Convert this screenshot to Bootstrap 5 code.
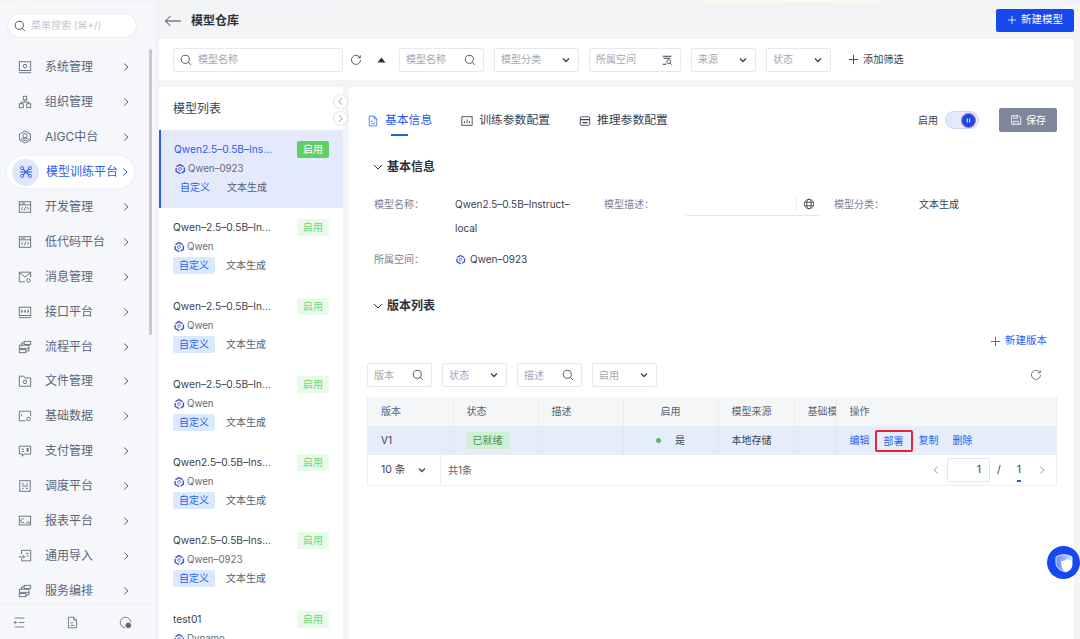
<!DOCTYPE html>
<html lang="zh">

<head>
    <meta charset="utf-8">
    <title>模型仓库</title>
    <link href="https://cdn.jsdelivr.net/npm/bootstrap@5.3.0/dist/css/bootstrap.min.css" rel="stylesheet">
    <style>
        html, body { height: 639px; overflow: hidden; }
        body { font-family: "Inter", "Noto Sans CJK SC", sans-serif; font-size: 11px; color: #3a4150; background: #f3f4f6; }
        svg.ic { fill: none; stroke: currentColor; stroke-width: 1; flex: none; }

        .app-shell { height: 639px; position: relative; overflow: hidden; }
        .top-strip { height: 2px; background: linear-gradient(90deg, #fdf1ec, #eef2fb 25%, #f1f7ee 55%, #fdfbe8 75%, #e9f2fc); }

        /* sidebar */
        .side-bar { width: 155px; flex: none; background: #f5f7fa; height: 637px; position: relative; }
        .side-search { height: 25px; margin: 11px 18px 0 7px; border: 1px solid #e9ebf0; border-radius: 13px; background: #fff; padding-left: 6px; color: #c3c7cf; font-size: 10px; gap: 5px; }
        .side-search svg { color: #3a4150; }
        .side-menu { margin-top: 12px; height: 554px; overflow: hidden; }
        .menu-row { height: 34.9px; padding-left: 18px; color: #5c6579; font-size: 12px; }
        .menu-row .menu-txt { margin-left: 13px; width: 76px; }
        .menu-row .menu-arrow { color: #5c6579; }
        .menu-row.is-on { height: 32px; margin: 1.45px 21px 1.45px 7px; padding-left: 5px; background: #fff; border-radius: 16px; color: #2b5cf0; box-shadow: 0 0 3px rgba(120, 130, 160, .12); width: 127px; }
        .menu-row.is-on .menu-txt { margin-left: 7px; width: 74px; white-space: nowrap; }
        .menu-row.is-on .menu-arrow { color: #2b5cf0; }
        .menu-dot { width: 27px; height: 27px; border-radius: 50%; background: #dfe8fb; flex: none; }
        .side-foot { height: 35px; border-top: 1px solid #eef0f3; padding: 0 20px 0 13px; color: #5c6579; margin-right: 3px; }
        .side-scroll { position: absolute; left: 149px; top: 47px; width: 3px; height: 286px; background: #c6c9ce; border-radius: 2px; }

        /* main */
        .main-area { width: 915px; margin-left: 4px; flex: none; }
        .page-head { height: 37px; padding-left: 5px; }
        .page-title { font-size: 12px; font-weight: 600; color: #2c3240; margin-left: 9px; }
        .btn-new { width: 78px; height: 23px; padding: 0; border: 0; border-radius: 2px; background: #1648ee; color: #fff; font-size: 10.5px; margin-top: -1px; }
        .filter-bar { height: 41px; background: #fff; padding-left: 14px; }
        .fbox { height: 24px; border: 1px solid #e6e8ed; border-radius: 2px; padding: 0 7px 0 6px; color: #a3a8b3; font-size: 10px; background: #fff; flex: none; }
        .fbox svg { color: #3a4150; }
        .filter-bar .fbox + .fbox { margin-left: 10px; }
        .fw-170 { width: 170px; justify-content: flex-start !important; gap: 6px; }
        .fw-85 { width: 85px; }
        .fw-92 { width: 92px; }
        .fw-65 { width: 65px; }
        .tool-refresh { margin: 0 7px 0 7px; color: #3a4150; }
        .tool-caret { margin-right: 13px; color: #2c3240; }
        .add-filter { margin-left: 17px; color: #3a4150; font-size: 10.2px; gap: 4px; }

        .work-row { margin-top: 7px; height: 552px; gap: 6px; }
        .list-panel { width: 184px; flex: none; background: #fff; overflow: hidden; height: 552px; }
        .list-title { height: 43px; padding: 14px 0 0 14px; font-size: 12px; color: #3a4150; line-height: 16px; }
        .model-item { height: 78.3px; padding: 10px 14px 0 14px; }
        .model-item.is-on { background: #e4eafb; border-left: 2px solid #2b5cf0; padding-left: 13px; }
        .model-item.is-on .model-name { color: #2b5cf0; }
        .model-item.is-on .state-tag { background: #5fd068; color: #fff; }
        .model-item.is-on .type-tag { background: #e0ebfb; }
        .model-name { line-height: 18px; color: #3a4150; font-size: 10.2px; white-space: nowrap; }
        .model-space { line-height: 18px; margin-top: 2px; color: #656c7d; font-size: 9.7px; gap: 2px; }
        .model-tags { margin-top: 1px; gap: 11px; font-size: 10px; color: #565d6d; }
        .type-tag { width: 42px; height: 17px; background: #dbe9fd; color: #2b5cf0; border-radius: 2px; line-height: 17px; text-align: center; }
        .tag-txt { line-height: 17px; }
        .state-tag { width: 32px; height: 17px; background: #e8fbe8; color: #72d67c; border-radius: 2px; line-height: 17px; text-align: center; font-size: 10px; margin-top: 1px; }
        .fold-btn { position: absolute; left: 333px; width: 15px; height: 15px; border-radius: 50%; background: #fff; border: 1px solid #dfe2e8; color: #8a90a0; }
        .fold-up { top: 94px; }
        .fold-down { top: 111px; }

        .detail-panel { width: 725px; background: #fff; padding: 21px 17px 0 18px; flex: none; height: 552px; }
        .tab-row { height: 24px; }
        .tab-item { font-size: 11.8px; color: #3a4150; position: relative; gap: 6px; padding-top: 1px; }
        .tab-first { color: #2b5cf0; margin-right: 29px; }
        .tab-first::after { content: ""; position: absolute; left: 24px; bottom: -7px; width: 17px; height: 2px; background: #2b5cf0; }
        .tab-second { margin-right: 29px; }
        .switch-txt { font-size: 10px; color: #3a4150; margin-right: 7px; }
        .switch-box { width: 34px; height: 18px; border-radius: 9px; background: #e2eafb; border: 1px solid #c9d8f6; padding-right: 3px; margin-right: 20px; }
        .switch-knob { width: 13px; height: 13px; border-radius: 50%; background: #1648ee; box-shadow: 0 0 0 1px #b96a96; }
        .btn-save { width: 58px; height: 24px; padding: 0; border: 0; border-radius: 2px; background: #7f879c; color: #fff; font-size: 10px; gap: 4px; }
        .sect-head { height: 18px; font-size: 12px; font-weight: 600; color: #2c3240; padding-left: 6px; gap: 4px; }
        .sect-one { margin-top: 26px; }
        .sect-two { margin-top: 26px; }
        .info-grid { display: grid; grid-template-columns: 81px 149px 82px 148px 85px 1fr; row-gap: 7px; margin-top: 16px; padding-left: 7px; line-height: 24px; }
        .info-key { color: #7d8391; font-size: 10px; }
        .info-val { color: #3a4150; font-size: 10px; width: 125px; }
        .info-input { width: 133px; height: 24px; border-bottom: 1px solid #e4e6eb; padding-right: 4px; color: #3a4150; }
        .info-input span { height: 14px; border-left: 1px solid #eceef2; padding-left: 6px; display: flex; align-items: center; }
        .new-ver { margin-top: 17px; height: 18px; color: #2b5cf0; font-size: 10.5px; gap: 4px; padding-right: 10px; }
        .ver-filter { margin-top: 13px; height: 24px; gap: 10px; }
        .ver-filter .fbox { width: 65px; }
        .ver-refresh { color: #5c6579; margin-right: 15px; }

        .ver-wrap { margin-top: 10px; border: 1px solid #eceef1; border-top: 0; width: 690px; }
        .ver-table { table-layout: fixed; width: 688px; font-size: 10.5px; margin: 0; --bs-table-bg: transparent; }
        .col-w85 { width: 85px; }
        .col-w95 { width: 95px; }
        .col-w76 { width: 76px; }
        .col-w42 { width: 42px; }
        .ver-table th, .ver-table td { padding: 0 0 0 13px; height: 29px; vertical-align: middle; white-space: nowrap; overflow: hidden; border-bottom: 0; border-right: 1px solid #eceef1; font-weight: 400; box-shadow: none; }
        .ver-table th { background: #f5f6f8; color: #5c6370; font-size: 10px; }
        .ver-table td { background: #e6edfa; color: #3a4150; border-right-color: #e0e6f2; font-size: 10px; }
        .ver-table .cell-mid { text-align: center; padding-left: 0; }
        .ver-table th.cell-op, .ver-table td.cell-op { box-shadow: -3px 0 3px -1px rgba(90, 100, 120, .14); border-right: 0; position: relative; overflow: visible; }
        .ready-tag { display: inline-block; width: 42px; height: 17px; line-height: 17px; text-align: center; background: #d0f0d2; color: #4c8f55; border-radius: 2px; font-size: 10px; }
        .on-dot { display: inline-block; width: 5px; height: 5px; border-radius: 50%; background: #55bd5c; margin-right: 14px; vertical-align: 1px; }
        .op-links { gap: 14px; color: #2b5cf0; font-size: 10px; }
        .op-mark { border: 2px solid #e8252f; border-radius: 2px; padding: 0 7px; height: 22px; line-height: 18px; margin: 0 -8px 0 -9px; }
        .ver-foot { height: 30px; font-size: 10.5px; }
        .page-size { width: 73px; height: 30px; border-right: 1px solid #eceef1; padding: 0 13px 0 13px; color: #3a4150; flex: none; }
        .page-total { margin-left: 7px; color: #565d6d; font-size: 10px; }
        .page-nav { color: #3a4150; padding-right: 9px; }
        .page-input { width: 43px; height: 24px; border: 1px solid #e4e6eb; border-radius: 2px; text-align: right; padding-right: 8px; line-height: 22px; margin: 0 7px 0 6px; }
        .page-cur { position: relative; margin: 0 16px 0 16px; }
        .page-cur::after { content: ""; position: absolute; left: 0; right: 0; bottom: -4px; height: 2px; background: #2b5cf0; }
        .page-arrow { color: #9aa0ad; }

        .float-bot { position: absolute; left: 1047px; top: 546px; width: 33px; height: 33px; border-radius: 50%; background: #1648ee; }
    </style>
</head>

<body>
    <svg width="0" height="0" class="position-absolute">
        <defs>
            <linearGradient id="g-shield" x1="0" y1="0" x2="1" y2="0"><stop offset="0" stop-color="#5d8af5"/><stop offset="1" stop-color="#d6e2fd"/></linearGradient>
            <symbol id="i-search" viewBox="0 0 14 14"><circle cx="6.2" cy="6.2" r="4.7"/><path d="M9.7 9.7l3 3"/></symbol>
            <symbol id="i-right" viewBox="0 0 10 10"><path d="M3.200 1.500L7 5 3.200 8.500"/></symbol>
            <symbol id="i-left" viewBox="0 0 10 10"><path d="M6.800 1.500L3 5l3.800 3.500"/></symbol>
            <symbol id="i-down" viewBox="0 0 10 10"><path d="M2 3.500L5 6.500 8 3.500" stroke-width="1.300"/></symbol>
            <symbol id="i-fold" viewBox="0 0 10 10"><path d="M1 3l4 4 4-4"/></symbol>
            <symbol id="i-plus" viewBox="0 0 12 12"><path d="M6 1v10M1 6h10"/></symbol>
            <symbol id="i-refresh" viewBox="0 0 14 14"><path d="M11.600 4.200A5.300 5.300 0 1 0 12.300 7"/><path d="M12 1.500v3H9"/></symbol>
            <symbol id="i-sys" viewBox="0 0 16 16"><rect x="1.500" y="2" width="13" height="10"/><circle cx="8" cy="7" r="2"/><path d="M1 14.500h14"/></symbol>
            <symbol id="i-org" viewBox="0 0 16 16"><rect x="6" y="1.500" width="4" height="4"/><rect x="1.500" y="10" width="4.500" height="4.500"/><rect x="10" y="10" width="4.500" height="4.500"/><path d="M8 5.500V8M3.700 10V8h8.600v2"/></symbol>
            <symbol id="i-aigc" viewBox="0 0 16 16"><path d="M8 1l6.200 3.500v7L8 15l-6.200-3.500v-7z"/><circle cx="8" cy="6.500" r="2.500"/><path d="M3 11l5-2 5 2M5 13c0-2 6-2 6 0"/></symbol>
            <symbol id="i-model" viewBox="0 0 16 16"><path d="M8 8L4.500 4.500M8 8l3.500-3.500M8 8l-3.500 3.500M8 8l3.500 3.500M1 8h14" stroke-width="1.300"/><circle cx="3.500" cy="3.500" r="1.800"/><circle cx="12.500" cy="3.500" r="1.800"/><circle cx="3.500" cy="12.500" r="1.800"/><circle cx="12.500" cy="12.500" r="1.800"/></symbol>
            <symbol id="i-dev" viewBox="0 0 16 16"><rect x="1.500" y="2" width="13" height="12"/><path d="M1.500 5.500h13M4 3.700h4"/><path d="M5.500 8L3.800 9.800l1.700 1.700M10.500 8l1.700 1.800-1.700 1.700M9 7.500l-2 4.500"/></symbol>
            <symbol id="i-msg" viewBox="0 0 16 16"><path d="M14.500 8V2.500h-13v11H8"/><path d="M1.500 3l6.500 5 6.500-5"/><circle cx="12" cy="12" r="2"/></symbol>
            <symbol id="i-api" viewBox="0 0 16 16"><rect x="1.500" y="2.500" width="13" height="9.500"/><path d="M4.500 5.500V9M8 5.500V9M11.500 5.500V9M3.500 7h2M7 7h2M10.500 7h2M1 14.500h14"/></symbol>
            <symbol id="i-flow" viewBox="0 0 16 16"><rect x="7" y="1.500" width="7.500" height="3.500"/><rect x="1.500" y="6" width="11" height="3.500"/><rect x="1.500" y="11" width="7.500" height="3.500"/><path d="M7 3.300H4v2.700M12.500 9.500v3H9"/></symbol>
            <symbol id="i-file" viewBox="0 0 16 16"><path d="M1.500 14V2.500h5l1.500 2h6.500V14z"/><circle cx="8" cy="9" r="2"/></symbol>
            <symbol id="i-data" viewBox="0 0 16 16"><path d="M14.500 8V2.500h-13v11H9"/><path d="M4 6v2M6 6v.1"/><circle cx="12" cy="11.500" r="2"/></symbol>
            <symbol id="i-pay" viewBox="0 0 16 16"><path d="M1.500 2.500h13v9H7l-2 2.500v-2.500H1.500z"/><path d="M4 6h3M4 8.500h3M9.500 5.500h3M11 4.500v4.500M9.500 7.500h3"/></symbol>
            <symbol id="i-sched" viewBox="0 0 16 16"><rect x="2" y="2" width="12" height="12"/><path d="M4.500 5.500h2.500M9.500 5.500h2M4.500 8h7M4.500 10.700h2M9 10.700h2.500"/></symbol>
            <symbol id="i-report" viewBox="0 0 16 16"><rect x="1.500" y="2.500" width="13" height="10"/><path d="M7 6A2.300 2.300 0 1 0 7 9.500"/><path d="M9.500 11V9.500M11.500 11V8M13 11V9.500"/></symbol>
            <symbol id="i-import" viewBox="0 0 16 16"><path d="M4 6V1.500h10.500v12H4V11"/><path d="M1 9h6.500M5.500 7l2 2-2 2M9 5h3M10 8h2"/></symbol>
            <symbol id="i-collapse" viewBox="0 0 16 16"><path d="M2 2.500h12M7 8h7M2 13.500h12M5 8H1.500M3.300 6L1.500 8l1.800 2"/></symbol>
            <symbol id="i-doc" viewBox="0 0 16 16"><path d="M3 1.500h6.500L13 5v9.500H3z"/><path d="M9.500 1.500V5H13M5.500 8.500h3M5.500 11.500h5"/></symbol>
            <symbol id="i-net" viewBox="0 0 16 16"><path d="M14.500 7.500A6.500 6.500 0 1 0 7.500 14.500"/><circle cx="11.500" cy="11.500" r="3" fill="currentColor"/></symbol>
            <symbol id="i-chart" viewBox="0 0 14 14"><rect x="1" y="2" width="12" height="10"/><path d="M4 9.500V7M7 9.500V5M10 9.500V7"/></symbol>
            <symbol id="i-cfg" viewBox="0 0 14 14"><rect x="1.500" y="2" width="11" height="10" rx="1.500"/><path d="M1.500 5.500h11M4 9h6" stroke-width="1.400"/></symbol>
            <symbol id="i-globe" viewBox="0 0 14 14"><circle cx="7" cy="7" r="5.500"/><ellipse cx="7" cy="7" rx="2.500" ry="5.500"/><path d="M1.800 5h10.400M1.800 9h10.400"/></symbol>
            <symbol id="i-save" viewBox="0 0 14 14"><path d="M2 2h8l2.500 2.500V12H2z"/><path d="M4.500 2v3h4V2M4.500 12V8.500h5V12"/></symbol>
            <symbol id="i-space" viewBox="0 0 14 14"><path d="M2 2.500h10M3 5h8M2 12h4" stroke-width="1.200"/><circle cx="9" cy="9" r="2.300"/><path d="M10.700 10.700l1.800 1.800"/></symbol>
            <symbol id="i-qwen" viewBox="0 0 14 14"><g fill="none" stroke-width="1.700"><path d="M2.800 4.300L7 1.800l4.200 2.400" stroke="#5a55c0"/><path d="M12.100 5.300v4.500l-3.300 2" stroke="#2b5cf0"/><path d="M7.300 12.500L2.500 9.800V5.800" stroke="#5a55c0"/></g><path d="M5.500 6.200l2.300-1.100.9 2.400-2 1.400-1.500-1.300z" fill="none" stroke="#2b5cf0" stroke-width="1"/></symbol>
        </defs>
    </svg>

    <div class="app-shell">
        <div class="top-strip"></div>
        <div class="d-flex">
            <!-- Sidebar -->
            <aside class="side-bar">
                <div class="side-search d-flex align-items-center">
                    <svg class="ic" width="12" height="12"><use href="#i-search"/></svg>
                    <span>菜单搜索 (⌘+/)</span>
                </div>
                <div class="side-menu">
                    <div class="menu-row d-flex align-items-center"><svg class="ic" width="14" height="14"><use href="#i-sys"/></svg><span class="menu-txt">系统管理</span><svg class="ic menu-arrow" width="10" height="10"><use href="#i-right"/></svg></div>
                    <div class="menu-row d-flex align-items-center"><svg class="ic" width="14" height="14"><use href="#i-org"/></svg><span class="menu-txt">组织管理</span><svg class="ic menu-arrow" width="10" height="10"><use href="#i-right"/></svg></div>
                    <div class="menu-row d-flex align-items-center"><svg class="ic" width="14" height="14"><use href="#i-aigc"/></svg><span class="menu-txt">AIGC中台</span><svg class="ic menu-arrow" width="10" height="10"><use href="#i-right"/></svg></div>
                    <div class="menu-row is-on d-flex align-items-center"><span class="menu-dot d-flex align-items-center justify-content-center"><svg class="ic" width="14" height="14"><use href="#i-model"/></svg></span><span class="menu-txt">模型训练平台</span><svg class="ic menu-arrow" width="10" height="10"><use href="#i-right"/></svg></div>
                    <div class="menu-row d-flex align-items-center"><svg class="ic" width="14" height="14"><use href="#i-dev"/></svg><span class="menu-txt">开发管理</span><svg class="ic menu-arrow" width="10" height="10"><use href="#i-right"/></svg></div>
                    <div class="menu-row d-flex align-items-center"><svg class="ic" width="14" height="14"><use href="#i-dev"/></svg><span class="menu-txt">低代码平台</span><svg class="ic menu-arrow" width="10" height="10"><use href="#i-right"/></svg></div>
                    <div class="menu-row d-flex align-items-center"><svg class="ic" width="14" height="14"><use href="#i-msg"/></svg><span class="menu-txt">消息管理</span><svg class="ic menu-arrow" width="10" height="10"><use href="#i-right"/></svg></div>
                    <div class="menu-row d-flex align-items-center"><svg class="ic" width="14" height="14"><use href="#i-api"/></svg><span class="menu-txt">接口平台</span><svg class="ic menu-arrow" width="10" height="10"><use href="#i-right"/></svg></div>
                    <div class="menu-row d-flex align-items-center"><svg class="ic" width="14" height="14"><use href="#i-flow"/></svg><span class="menu-txt">流程平台</span><svg class="ic menu-arrow" width="10" height="10"><use href="#i-right"/></svg></div>
                    <div class="menu-row d-flex align-items-center"><svg class="ic" width="14" height="14"><use href="#i-file"/></svg><span class="menu-txt">文件管理</span><svg class="ic menu-arrow" width="10" height="10"><use href="#i-right"/></svg></div>
                    <div class="menu-row d-flex align-items-center"><svg class="ic" width="14" height="14"><use href="#i-data"/></svg><span class="menu-txt">基础数据</span><svg class="ic menu-arrow" width="10" height="10"><use href="#i-right"/></svg></div>
                    <div class="menu-row d-flex align-items-center"><svg class="ic" width="14" height="14"><use href="#i-pay"/></svg><span class="menu-txt">支付管理</span><svg class="ic menu-arrow" width="10" height="10"><use href="#i-right"/></svg></div>
                    <div class="menu-row d-flex align-items-center"><svg class="ic" width="14" height="14"><use href="#i-sched"/></svg><span class="menu-txt">调度平台</span><svg class="ic menu-arrow" width="10" height="10"><use href="#i-right"/></svg></div>
                    <div class="menu-row d-flex align-items-center"><svg class="ic" width="14" height="14"><use href="#i-report"/></svg><span class="menu-txt">报表平台</span><svg class="ic menu-arrow" width="10" height="10"><use href="#i-right"/></svg></div>
                    <div class="menu-row d-flex align-items-center"><svg class="ic" width="14" height="14"><use href="#i-import"/></svg><span class="menu-txt">通用导入</span><svg class="ic menu-arrow" width="10" height="10"><use href="#i-right"/></svg></div>
                    <div class="menu-row d-flex align-items-center"><svg class="ic" width="14" height="14"><use href="#i-flow"/></svg><span class="menu-txt">服务编排</span><svg class="ic menu-arrow" width="10" height="10"><use href="#i-right"/></svg></div>
                </div>
                <div class="side-foot d-flex align-items-center justify-content-between">
                    <svg class="ic" width="13" height="13"><use href="#i-collapse"/></svg>
                    <svg class="ic" width="13" height="13"><use href="#i-doc"/></svg>
                    <svg class="ic" width="13" height="13"><use href="#i-net"/></svg>
                </div>
                <div class="side-scroll"></div>
            </aside>

            <!-- Main -->
            <main class="main-area">
                <div class="page-head d-flex align-items-center">
                    <svg class="ic" width="18" height="12" viewBox="0 0 18 12"><path d="M17 6H1.500M6.500 1L1.500 6l5 5"/></svg>
                    <span class="page-title">模型仓库</span>
                    <button class="btn btn-new ms-auto d-flex align-items-center justify-content-center gap-1">
                        <svg class="ic" width="10" height="10"><use href="#i-plus"/></svg>新建模型
                    </button>
                </div>

                <div class="filter-bar d-flex align-items-center">
                    <div class="fbox fw-170 d-flex align-items-center"><svg class="ic" width="12" height="12"><use href="#i-search"/></svg><span>模型名称</span></div>
                    <svg class="ic tool-refresh" width="12" height="12"><use href="#i-refresh"/></svg>
                    <svg class="ms-2 tool-caret" width="9" height="6" viewBox="0 0 9 6"><path d="M4.500 0.500L8.500 5.500H0.500z" fill="currentColor"/></svg>
                    <div class="fbox fw-85 d-flex align-items-center justify-content-between"><span>模型名称</span><svg class="ic" width="12" height="12"><use href="#i-search"/></svg></div>
                    <div class="fbox fw-85 d-flex align-items-center justify-content-between"><span>模型分类</span><svg class="ic" width="10" height="10"><use href="#i-down"/></svg></div>
                    <div class="fbox fw-92 d-flex align-items-center justify-content-between"><span>所属空间</span><svg class="ic" width="12" height="12"><use href="#i-space"/></svg></div>
                    <div class="fbox fw-65 d-flex align-items-center justify-content-between"><span>来源</span><svg class="ic" width="10" height="10"><use href="#i-down"/></svg></div>
                    <div class="fbox fw-65 d-flex align-items-center justify-content-between"><span>状态</span><svg class="ic" width="10" height="10"><use href="#i-down"/></svg></div>
                    <div class="add-filter d-flex align-items-center"><svg class="ic" width="11" height="11"><use href="#i-plus"/></svg>添加筛选</div>
                </div>

                <div class="work-row d-flex">
                    <!-- Model list -->
                    <section class="list-panel">
                        <div class="list-title">模型列表</div>

                        <div class="model-item is-on d-flex justify-content-between">
                            <div>
                                <div class="model-name">Qwen2.5–0.5B–Ins…</div>
                                <div class="model-space d-flex align-items-center"><svg width="12" height="12"><use href="#i-qwen"/></svg>Qwen–0923</div>
                                <div class="model-tags d-flex"><span class="type-tag">自定义</span><span class="tag-txt">文本生成</span></div>
                            </div>
                            <span class="state-tag">启用</span>
                        </div>
                        <div class="model-item d-flex justify-content-between">
                            <div>
                                <div class="model-name">Qwen–2.5–0.5B–In…</div>
                                <div class="model-space d-flex align-items-center"><svg width="12" height="12"><use href="#i-qwen"/></svg>Qwen</div>
                                <div class="model-tags d-flex"><span class="type-tag">自定义</span><span class="tag-txt">文本生成</span></div>
                            </div>
                            <span class="state-tag">启用</span>
                        </div>
                        <div class="model-item d-flex justify-content-between">
                            <div>
                                <div class="model-name">Qwen–2.5–0.5B–In…</div>
                                <div class="model-space d-flex align-items-center"><svg width="12" height="12"><use href="#i-qwen"/></svg>Qwen</div>
                                <div class="model-tags d-flex"><span class="type-tag">自定义</span><span class="tag-txt">文本生成</span></div>
                            </div>
                            <span class="state-tag">启用</span>
                        </div>
                        <div class="model-item d-flex justify-content-between">
                            <div>
                                <div class="model-name">Qwen–2.5–0.5B–In…</div>
                                <div class="model-space d-flex align-items-center"><svg width="12" height="12"><use href="#i-qwen"/></svg>Qwen</div>
                                <div class="model-tags d-flex"><span class="type-tag">自定义</span><span class="tag-txt">文本生成</span></div>
                            </div>
                            <span class="state-tag">启用</span>
                        </div>
                        <div class="model-item d-flex justify-content-between">
                            <div>
                                <div class="model-name">Qwen2.5–0.5B–Ins…</div>
                                <div class="model-space d-flex align-items-center"><svg width="12" height="12"><use href="#i-qwen"/></svg>Qwen</div>
                                <div class="model-tags d-flex"><span class="type-tag">自定义</span><span class="tag-txt">文本生成</span></div>
                            </div>
                            <span class="state-tag">启用</span>
                        </div>
                        <div class="model-item d-flex justify-content-between">
                            <div>
                                <div class="model-name">Qwen2.5–0.5B–Ins…</div>
                                <div class="model-space d-flex align-items-center"><svg width="12" height="12"><use href="#i-qwen"/></svg>Qwen–0923</div>
                                <div class="model-tags d-flex"><span class="type-tag">自定义</span><span class="tag-txt">文本生成</span></div>
                            </div>
                            <span class="state-tag">启用</span>
                        </div>
                        <div class="model-item d-flex justify-content-between">
                            <div>
                                <div class="model-name">test01</div>
                                <div class="model-space d-flex align-items-center"><svg width="12" height="12"><use href="#i-qwen"/></svg>Dynamo</div>
                            </div>
                            <span class="state-tag">启用</span>
                        </div>
                    </section>

                    <!-- Detail -->
                    <section class="detail-panel">
                        <div class="tab-row d-flex align-items-center">
                            <div class="tab-item tab-first d-flex align-items-center"><svg class="ic" width="12" height="12"><use href="#i-doc"/></svg>基本信息</div>
                            <div class="tab-item tab-second d-flex align-items-center"><svg class="ic" width="12" height="12"><use href="#i-chart"/></svg>训练参数配置</div>
                            <div class="tab-item d-flex align-items-center"><svg class="ic" width="12" height="12"><use href="#i-cfg"/></svg>推理参数配置</div>
                            <span class="switch-txt ms-auto">启用</span>
                            <div class="switch-box d-flex align-items-center justify-content-end">
                                <span class="switch-knob d-flex align-items-center justify-content-center"><svg width="7" height="7" viewBox="0 0 7 7"><path d="M2.300 1.500v4M4.700 1.500v4" stroke="#fff" stroke-width="1"/></svg></span>
                            </div>
                            <button class="btn btn-save d-flex align-items-center justify-content-center"><svg class="ic" width="12" height="12"><use href="#i-save"/></svg>保存</button>
                        </div>

                        <div class="sect-head sect-one d-flex align-items-center"><svg class="ic" width="10" height="10"><use href="#i-fold"/></svg>基本信息</div>
                        <div class="info-grid">
                            <span class="info-key">模型名称：</span>
                            <span class="info-val">Qwen2.5–0.5B–Instruct–local</span>
                            <span class="info-key">模型描述：</span>
                            <div class="info-input d-flex align-items-center justify-content-end"><span><svg class="ic" width="12" height="12"><use href="#i-globe"/></svg></span></div>
                            <span class="info-key">模型分类：</span>
                            <span class="info-val">文本生成</span>
                            <span class="info-key">所属空间：</span>
                            <span class="info-val d-flex align-items-center gap-1"><svg width="11" height="11"><use href="#i-qwen"/></svg>Qwen–0923</span>
                        </div>

                        <div class="sect-head sect-two d-flex align-items-center"><svg class="ic" width="10" height="10"><use href="#i-fold"/></svg>版本列表</div>
                        <div class="new-ver d-flex align-items-center justify-content-end"><svg class="ic" width="11" height="11"><use href="#i-plus"/></svg>新建版本</div>

                        <div class="ver-filter d-flex align-items-center">
                            <div class="fbox d-flex align-items-center justify-content-between"><span>版本</span><svg class="ic" width="12" height="12"><use href="#i-search"/></svg></div>
                            <div class="fbox d-flex align-items-center justify-content-between"><span>状态</span><svg class="ic" width="10" height="10"><use href="#i-down"/></svg></div>
                            <div class="fbox d-flex align-items-center justify-content-between"><span>描述</span><svg class="ic" width="12" height="12"><use href="#i-search"/></svg></div>
                            <div class="fbox d-flex align-items-center justify-content-between"><span>启用</span><svg class="ic" width="10" height="10"><use href="#i-down"/></svg></div>
                            <svg class="ic ver-refresh ms-auto" width="12" height="12"><use href="#i-refresh"/></svg>
                        </div>

                        <div class="ver-wrap">
                            <table class="table ver-table">
                                <colgroup>
                                    <col class="col-w85"><col class="col-w85"><col class="col-w85"><col class="col-w95"><col class="col-w76"><col class="col-w42"><col>
                                </colgroup>
                                <thead>
                                    <tr><th>版本</th><th>状态</th><th>描述</th><th class="cell-mid">启用</th><th>模型来源</th><th>基础模型</th><th class="cell-op">操作</th></tr>
                                </thead>
                                <tbody>
                                    <tr>
                                        <td>V1</td>
                                        <td><span class="ready-tag">已就绪</span></td>
                                        <td></td>
                                        <td class="cell-mid"><span class="on-dot"></span>是</td>
                                        <td>本地存储</td>
                                        <td></td>
                                        <td class="cell-op"><div class="op-links d-flex align-items-center"><span>编辑</span><span class="op-mark">部署</span><span>复制</span><span>删除</span></div></td>
                                    </tr>
                                </tbody>
                            </table>
                            <div class="ver-foot d-flex align-items-center">
                                <div class="page-size d-flex align-items-center justify-content-between"><span>10 条</span><svg class="ic" width="10" height="10"><use href="#i-down"/></svg></div>
                                <span class="page-total">共1条</span>
                                <div class="page-nav ms-auto d-flex align-items-center">
                                    <svg class="ic page-arrow" width="10" height="10"><use href="#i-left"/></svg>
                                    <span class="page-input">1</span>
                                    <span>/</span>
                                    <span class="page-cur">1</span>
                                    <svg class="ic page-arrow" width="10" height="10"><use href="#i-right"/></svg>
                                </div>
                            </div>
                        </div>
                    </section>
                </div>
            </main>
        </div>

        <button class="fold-btn fold-up p-0 d-flex align-items-center justify-content-center"><svg class="ic" width="9" height="9"><use href="#i-left"/></svg></button>
        <button class="fold-btn fold-down p-0 d-flex align-items-center justify-content-center"><svg class="ic" width="9" height="9"><use href="#i-right"/></svg></button>

        <div class="float-bot d-flex align-items-center justify-content-center">
            <svg width="24" height="24" viewBox="0 0 24 24"><path d="M4 6c4-3 12-3 16 0v8c0 4-4 6-6 7-5-1-10-4-10-9z" fill="url(#g-shield)" stroke="#d7e3ff" stroke-width="1"/><path d="M9 10c3 0 5-1 6-2 2 1 4 1 5 1v5c0 4-3 6-6 7-3-2-5-5-5-11z" fill="#fff"/></svg>
        </div>
    </div>
</body>

</html>
